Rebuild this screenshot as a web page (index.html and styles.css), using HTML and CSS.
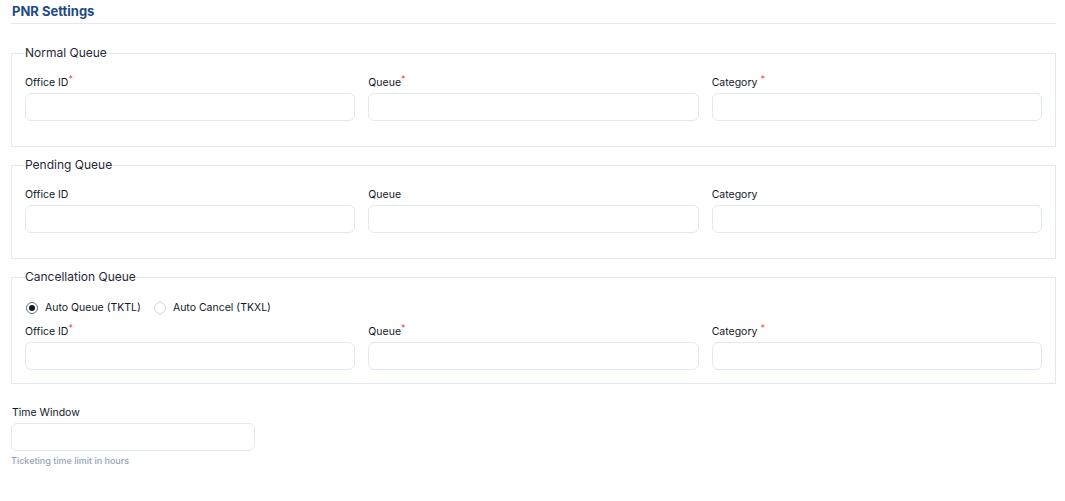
FILE: index.html
```html
<!DOCTYPE html>
<html lang="en">
<head>
<meta charset="utf-8">
<title>PNR Settings</title>
<link rel="stylesheet" href="styles.css">
</head>
<body>
<div class="page">
  <h2 class="title">PNR Settings</h2>

  <fieldset class="group">
    <legend>Normal Queue</legend>
    <div class="grid">
      <div class="field"><label>Office ID<sup class="req">*</sup></label><input class="input" type="text"></div>
      <div class="field"><label>Queue<sup class="req">*</sup></label><input class="input" type="text"></div>
      <div class="field"><label>Category <sup class="req">*</sup></label><input class="input" type="text"></div>
    </div>
  </fieldset>

  <fieldset class="group">
    <legend>Pending Queue</legend>
    <div class="grid">
      <div class="field"><label>Office ID</label><input class="input" type="text"></div>
      <div class="field"><label>Queue</label><input class="input" type="text"></div>
      <div class="field"><label>Category</label><input class="input" type="text"></div>
    </div>
  </fieldset>

  <fieldset class="group compact">
    <legend>Cancellation Queue</legend>
    <div class="radios">
      <label class="radio"><span class="dot checked"></span>Auto Queue (TKTL)</label>
      <label class="radio"><span class="dot"></span>Auto Cancel (TKXL)</label>
    </div>
    <div class="grid">
      <div class="field"><label>Office ID<sup class="req">*</sup></label><input class="input" type="text"></div>
      <div class="field"><label>Queue<sup class="req">*</sup></label><input class="input" type="text"></div>
      <div class="field"><label>Category <sup class="req">*</sup></label><input class="input" type="text"></div>
    </div>
  </fieldset>

  <div class="field time">
    <label>Time Window</label>
    <input class="input" type="text">
    <div class="help">Ticketing time limit in hours</div>
  </div>
</div>
</body>
</html>
```
FILE: styles.css
```css
* { box-sizing: border-box; }
body {
  margin: 0;
  background: #ffffff;
  font-family: Inter, "Noto Sans", Arial, sans-serif;
  color: #1f2937;
}
.page {
  padding: 3px 9px 0 11px;
}
.title {
  margin: 0 0 21px 0;
  padding: 0 0 4px 1px;
  font-size: 13px;
  line-height: 16px;
  font-weight: 700;
  color: #1e4b84;
  border-bottom: 1px solid #e2e8f0;
}
.group {
  margin: 0 0 10px 0;
  padding: 14px 13px 25px 13px;
  border: 1px solid #e2e8f0;
  min-width: 0;
}
.group.compact {
  padding-bottom: 13px;
}
.group legend {
  padding: 0;
  font-size: 12px;
  line-height: 16px;
  color: #1f2937;
}
.grid {
  display: grid;
  grid-template-columns: repeat(3, 1fr);
  gap: 13px;
}
.field {
  display: flex;
  flex-direction: column;
}
.field label {
  font-size: 10.5px;
  line-height: 16px;
  font-weight: 400;
  color: #111827;
  margin-bottom: 2px;
}
.req {
  color: #ef4444;
  font-size: 9px;
  line-height: 0;
  vertical-align: 4px;
}
.input {
  height: 28px;
  width: 100%;
  border: 1px solid #e2e8f0;
  border-radius: 6px;
  background: #fff;
  outline: none;
  font: inherit;
}
.radios {
  display: flex;
  gap: 12px;
  margin: 1px 0 8px 0;
}
.radio {
  display: flex;
  align-items: center;
  gap: 7px;
  font-size: 10.5px;
  line-height: 16px;
  font-weight: 400;
  color: #111827;
}
.dot {
  width: 12px;
  height: 12px;
  border-radius: 50%;
  border: 1px solid #d1d5db;
  display: inline-flex;
  align-items: center;
  justify-content: center;
  margin-left: 1px;
}
.dot.checked {
  border-color: #6b7280;
}
.dot.checked::after {
  content: "";
  width: 6px;
  height: 6px;
  border-radius: 50%;
  background: #111827;
}
.time {
  margin-top: 21px;
  width: 244px;
}
.time label {
  padding-left: 1px;
}
.help {
  margin-top: 4px;
  font-size: 9px;
  line-height: 12px;
  color: #94a3b8;
  font-weight: 500;
}
```
